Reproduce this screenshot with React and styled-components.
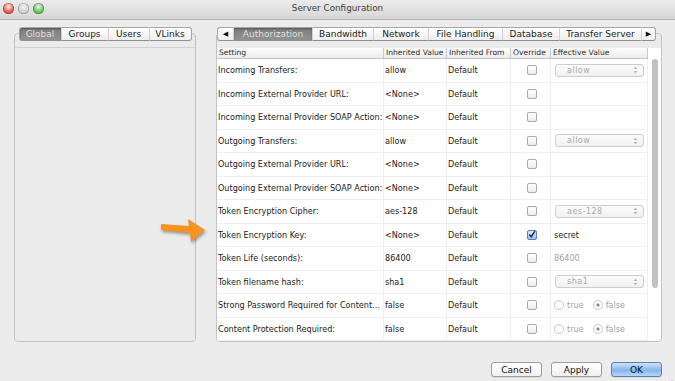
import React from "react";
import styled, { createGlobalStyle } from "styled-components";

const rows = [
  { label: "Incoming Transfers:", value: "allow", effect: { kind: "combo", text: "allow" } },
  { label: "Incoming External Provider URL:", value: "<None>" },
  { label: "Incoming External Provider SOAP Action:", value: "<None>" },
  { label: "Outgoing Transfers:", value: "allow", effect: { kind: "combo", text: "allow" } },
  { label: "Outgoing External Provider URL:", value: "<None>" },
  { label: "Outgoing External Provider SOAP Action:", value: "<None>" },
  { label: "Token Encryption Cipher:", value: "aes-128", effect: { kind: "combo", text: "aes-128" } },
  { label: "Token Encryption Key:", value: "<None>", checked: true, effect: { kind: "text", text: "secret" } },
  { label: "Token Life (seconds):", value: "86400", effect: { kind: "muted", text: "86400" } },
  { label: "Token filename hash:", value: "sha1", effect: { kind: "combo", text: "sha1" } },
  { label: "Strong Password Required for Content…", value: "false", effect: { kind: "radio" } },
  { label: "Content Protection Required:", value: "false", effect: { kind: "radio" } },
];

const leftTabs = [
  { name: "Global", w: 42 },
  { name: "Groups", w: 47 },
  { name: "Users", w: 41 },
  { name: "VLinks", w: 43 },
];

const rightTabs = [
  { name: "Authorization", w: 79 },
  { name: "Bandwidth", w: 61 },
  { name: "Network", w: 55 },
  { name: "File Handling", w: 74 },
  { name: "Database", w: 57 },
  { name: "Transfer Server", w: 82 },
];

const columns = ["Setting", "Inherited Value", "Inherited From", "Override", "Effective Value"];

export default function App() {
  return (
    <>
      <GlobalStyle />
      <Window>
        <TitleBar>
          <Lights>
            <Light $color="#e5524c" />
            <Light $color="#cfcfcf" />
            <Light $color="#5cc151" />
          </Lights>
          <Title>Server Configuration</Title>
          <span />
        </TitleBar>

        <Main>
          <Pane $width={182}>
            <TabRow $center>
              {leftTabs.map((tab, i) => (
                <Tab key={tab.name} $w={tab.w} $active={i === 0}>
                  {tab.name}
                </Tab>
              ))}
            </TabRow>
            <Frame>
              <EmptyInner />
            </Frame>
          </Pane>

          <Pane $width={446}>
            <TabRow>
              <ArrowTab $w={16}>◀</ArrowTab>
              {rightTabs.map((tab, i) => (
                <Tab key={tab.name} $w={tab.w} $active={i === 0}>
                  {tab.name}
                </Tab>
              ))}
              <ArrowTab $w={15}>▶</ArrowTab>
            </TabRow>
            <Frame>
              <TableArea>
                <Grid>
                  {columns.map((c) => (
                    <HeadCell key={c}>{c}</HeadCell>
                  ))}
                  {rows.map((row) => (
                    <React.Fragment key={row.label}>
                      <Cell>{row.label}</Cell>
                      <Cell>{row.value}</Cell>
                      <Cell>Default</Cell>
                      <Cell $center>
                        <Checkbox $checked={row.checked}>
                          {row.checked && (
                            <svg width="9" height="9" viewBox="0 0 9 9">
                              <path d="M1.5 4.5 L3.6 7 L7.8 0.8" fill="none" stroke="#1b2a44" strokeWidth="1.6" />
                            </svg>
                          )}
                        </Checkbox>
                      </Cell>
                      <Cell>{row.effect && <Effective effect={row.effect} />}</Cell>
                    </React.Fragment>
                  ))}
                </Grid>
                <ScrollTrack>
                  <Thumb />
                </ScrollTrack>
              </TableArea>
            </Frame>
          </Pane>
        </Main>

        <Footer>
          <Button>Cancel</Button>
          <Button>Apply</Button>
          <Button $primary>OK</Button>
          <Grip width="7" height="7" viewBox="0 0 7 7">
            <path d="M6.5 1 L1 6.5 M6.5 3.5 L3.5 6.5 M6.5 5.8 L5.8 6.5" stroke="#9a9a9a" strokeWidth="0.8" />
          </Grip>
        </Footer>

        <Pointer width="52" height="32" viewBox="0 0 52 32">
          <polygon points="3,8 31,10 30,3 47,14 33,26 32,17 3,14" fill="#f7931e" />
        </Pointer>
      </Window>
    </>
  );
}

function Effective({ effect }) {
  if (effect.kind === "combo") {
    return (
      <Combo>
        <span>{effect.text}</span>
        <svg width="5" height="8" viewBox="0 0 5 8">
          <path d="M0.5 3 L2.5 0.8 L4.5 3 Z M0.5 5 L2.5 7.2 L4.5 5 Z" fill="#b5b5b5" />
        </svg>
      </Combo>
    );
  }
  if (effect.kind === "radio") {
    return (
      <RadioGroup>
        <RadioItem>
          <Radio />
          true
        </RadioItem>
        <RadioItem>
          <Radio $on />
          false
        </RadioItem>
      </RadioGroup>
    );
  }
  return <EffectText $muted={effect.kind === "muted"}>{effect.text}</EffectText>;
}

const GlobalStyle = createGlobalStyle`
  html, body {
    margin: 0;
    padding: 0;
    background: #ececec;
  }
  body {
    font-family: "DejaVu Sans", "Liberation Sans", sans-serif;
    color: #1a1a1a;
  }
`;

const Window = styled.div`
  position: relative;
  width: 675px;
  height: 381px;
  display: flex;
  flex-direction: column;
  background: #ececec;
  overflow: hidden;
`;

// Title bar

const TitleBar = styled.div`
  height: 19px;
  flex: none;
  display: grid;
  grid-template-columns: 1fr auto 1fr;
  align-items: center;
  background: linear-gradient(#ebebeb, #d6d6d6);
  border-bottom: 1px solid #b4b4b4;
`;

const Lights = styled.div`
  display: flex;
  gap: 4px;
  padding-left: 3px;
  margin-top: -3px;
`;

const Light = styled.span`
  width: 11px;
  height: 11px;
  border-radius: 50%;
  background: radial-gradient(circle at 50% 35%, #fff8 0, ${({ $color }) => $color} 60%);
  box-shadow: inset 0 0 0 0.5px rgba(0, 0, 0, 0.35);
`;

const Title = styled.div`
  font-size: 8.8px;
  color: #404040;
  margin-top: -3px;
`;

// Main area with both tabbed panes

const Main = styled.div`
  flex: 1;
  display: flex;
  gap: 20px;
  padding: 7px 13px 0 14px;
`;

const Pane = styled.div`
  width: ${({ $width }) => $width}px;
  display: flex;
  flex-direction: column;
`;

const TabRow = styled.div`
  position: relative;
  z-index: 1;
  display: flex;
  height: 14px;
  justify-content: ${({ $center }) => ($center ? "center" : "flex-start")};
  padding-left: ${({ $center }) => ($center ? 0 : 1)}px;
  & > * {
    border-top: 1px solid #a6a6a6;
    border-bottom: 1px solid #8e8e8e;
    border-left: 1px solid #d2d2d2;
  }
  & > *:first-child {
    border-left: 1px solid #a6a6a6;
    border-radius: 3px 0 0 3px;
  }
  & > *:last-child {
    border-right: 1px solid #a6a6a6;
    border-radius: 0 3px 3px 0;
  }
`;

const Tab = styled.div`
  box-sizing: border-box;
  width: ${({ $w }) => $w}px;
  display: flex;
  align-items: center;
  justify-content: center;
  font-size: 9px;
  white-space: nowrap;
  color: ${({ $active }) => ($active ? "#e9e9e9" : "#1c1c1c")};
  text-shadow: ${({ $active }) => ($active ? "0 -0.5px 0 #5f5f5f" : "none")};
  background: ${({ $active }) =>
    $active ? "linear-gradient(#7d7d7d, #939393)" : "linear-gradient(#ffffff, #eeeeee)"};
  box-shadow: ${({ $active }) => ($active ? "inset 0 1px 2px rgba(0,0,0,0.35)" : "none")};
`;

const ArrowTab = styled(Tab)`
  font-size: 7px;
  color: #111;
`;

const Frame = styled.div`
  flex: 1;
  margin-top: -8px;
  padding-top: 14px;
  border: 1px solid #c2c2c2;
  border-radius: 4px;
  background: #ebebeb;
  display: flex;
  flex-direction: column;
  overflow: hidden;
`;

const EmptyInner = styled.div`
  flex: 1;
  margin-top: -1px;
  border-top: 1px solid #d2d2d2;
  background: #ebebeb;
`;

// Settings table

const TableArea = styled.div`
  flex: 1;
  display: flex;
  background: #fff;
  overflow: hidden;
`;

const Grid = styled.div`
  width: 431px;
  display: grid;
  grid-template-columns: 167px 63px 64px 40px 97px;
  grid-auto-rows: 23.5px;
  grid-template-rows: 11px;
  align-content: start;
`;

const HeadCell = styled.div`
  box-sizing: border-box;
  height: 11px;
  padding-left: 2px;
  font-size: 7.6px;
  line-height: 10px;
  color: #2a2a2a;
  white-space: nowrap;
  background: linear-gradient(#fdfdfd, #ececec);
  border-bottom: 1px solid #c3c3c3;
  border-right: 1px solid #c8c8c8;
`;

const Cell = styled.div`
  box-sizing: border-box;
  display: flex;
  align-items: center;
  justify-content: ${({ $center }) => ($center ? "center" : "flex-start")};
  padding-left: 1px;
  font-size: 8.1px;
  white-space: nowrap;
  overflow: hidden;
  border-right: 1px solid #efefef;
  border-bottom: 1px solid #efefef;
`;

const Checkbox = styled.span`
  box-sizing: border-box;
  width: 10px;
  height: 10px;
  margin-left: 2px;
  border-radius: 2px;
  display: flex;
  align-items: center;
  justify-content: center;
  border: 1px solid ${({ $checked }) => ($checked ? "#5a7fb3" : "#a9a9a9")};
  background: ${({ $checked }) =>
    $checked ? "linear-gradient(#d9eafb, #92c0ee)" : "linear-gradient(#ffffff, #ececec)"};
`;

const Combo = styled.div`
  box-sizing: border-box;
  width: 89px;
  height: 13px;
  margin-left: 3px;
  padding: 0 5px 0 11px;
  display: flex;
  align-items: center;
  justify-content: space-between;
  border: 1px solid #cdcdcd;
  border-radius: 3px;
  background: linear-gradient(#fbfbfb, #f1f1f1);
  color: #a9a9a9;
  font-size: 8px;
  letter-spacing: 0.5px;
`;

const EffectText = styled.span`
  padding-left: 2px;
  color: ${({ $muted }) => ($muted ? "#a3a3a3" : "#1a1a1a")};
`;

const RadioGroup = styled.div`
  display: flex;
  gap: 9px;
  padding-left: 2px;
  color: #a3a3a3;
  font-size: 8.1px;
`;

const RadioItem = styled.span`
  display: flex;
  align-items: center;
  gap: 3px;
`;

const Radio = styled.span`
  box-sizing: border-box;
  width: 10px;
  height: 10px;
  border-radius: 50%;
  border: 1px solid #c9c9c9;
  background: ${({ $on }) =>
    $on ? "radial-gradient(circle, #8a8a8a 0 1.3px, #fdfdfd 1.8px)" : "#fdfdfd"};
`;

const ScrollTrack = styled.div`
  flex: 1;
  padding: 11px 0 0 4px;
`;

const Thumb = styled.div`
  width: 6px;
  height: 229px;
  border-radius: 3px;
  background: #c1c1c1;
`;

// Footer buttons

const Footer = styled.div`
  position: relative;
  height: 46px;
  flex: none;
  box-sizing: border-box;
  display: flex;
  justify-content: flex-end;
  align-items: flex-start;
  gap: 9px;
  padding: 20px 13px 0 0;
`;

const Button = styled.div`
  box-sizing: border-box;
  width: 51px;
  height: 15px;
  display: flex;
  align-items: center;
  justify-content: center;
  font-size: 9px;
  color: #111;
  border-radius: 3px;
  border: 1px solid ${({ $primary }) => ($primary ? "#5b80b2" : "#9c9c9c")};
  background: ${({ $primary }) =>
    $primary ? "linear-gradient(#cfe3f8, #8cbbee 50%, #7fb2eb 51%, #b6d6f7)" : "linear-gradient(#ffffff, #f0f0f0)"};
  box-shadow: 0 0.5px 0 rgba(0, 0, 0, 0.15);
`;

const Grip = styled.svg`
  position: absolute;
  right: 2px;
  bottom: 2px;
`;

const Pointer = styled.svg`
  position: absolute;
  left: 158px;
  top: 216px;
  filter: drop-shadow(1px 2px 1.5px rgba(0, 0, 0, 0.35));
`;
